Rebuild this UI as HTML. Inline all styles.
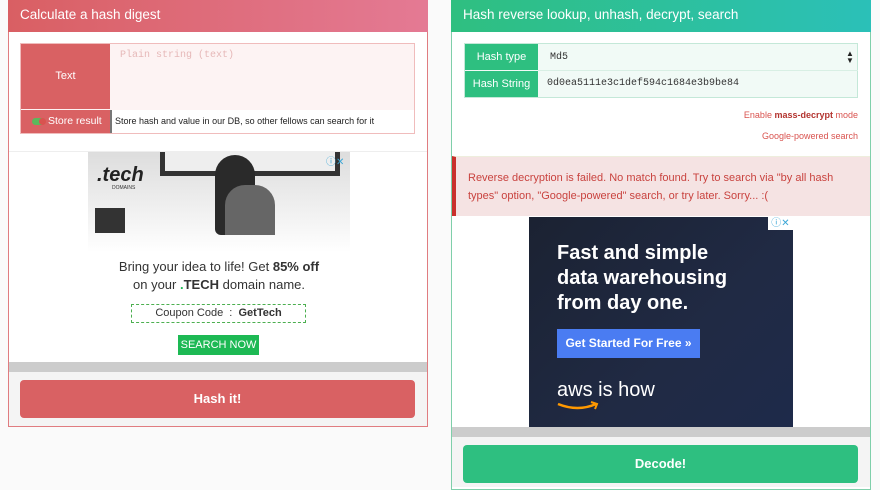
<!DOCTYPE html>
<html><head><meta charset="utf-8"><style>
*{box-sizing:border-box;margin:0;padding:0}
body{width:880px;height:487px;background:#fafafa;font-family:"Liberation Sans",sans-serif;position:relative;overflow:hidden}
.abs{position:absolute}
.mono{font-family:"Liberation Mono",monospace}
</style></head><body>
<!-- LEFT PANEL -->
<div class="abs" style="left:8px;top:0;width:420px;height:427px;border:1px solid #e07c80;background:#fff"></div>
<div class="abs" style="left:8px;top:0;width:420px;height:32px;background:linear-gradient(90deg,#d95f63,#e47a94);color:#fff;font-size:13.5px;padding:7px 12px">Calculate a hash digest</div>
<div class="abs" style="left:20px;top:43px;width:395px;height:91px;border:1px solid #f0bcbc;background:#fdf3f3"></div>
<div class="abs" style="left:21px;top:44px;width:89px;height:65px;background:#d96163;color:#fff;font-size:11px;text-align:center;line-height:65px">Text</div>
<div class="abs mono" style="left:120px;top:50px;font-size:10px;color:#e6b8b8">Plain string (text)</div>
<div class="abs" style="left:21px;top:110px;width:89px;height:23px;background:#d96163;"></div>
<div class="abs" style="left:32px;top:118px;width:13px;height:7px;border-radius:4px;background:#5cb85c"></div>
<div class="abs" style="left:39px;top:118px;width:7px;height:7px;border-radius:50%;background:#d9534f"></div>
<div class="abs" style="left:48px;top:110px;color:#fff;font-size:10.5px;line-height:23px">Store result</div>
<div class="abs" style="left:110px;top:110px;width:2px;height:23px;background:#777"></div>
<div class="abs" style="left:112px;top:110px;width:302px;height:23px;background:#fff;font-size:9px;line-height:23px;padding-left:3px;color:#222">Store hash and value in our DB, so other fellows can search for it</div>
<div class="abs" style="left:9px;top:151px;width:418px;height:1px;background:#eee"></div>
<!-- tech ad -->
<div class="abs" style="left:88px;top:152px;width:262px;height:100px;background:linear-gradient(180deg,#ddd,#f4f4f4 70%,#fff)"></div>
<div class="abs" style="left:160px;top:152px;width:180px;height:24px;border:5px solid #333;border-top:none;background:#eee"></div>
<div class="abs" style="left:215px;top:155px;width:40px;height:80px;background:#2a2a2a;border-radius:20px 20px 6px 6px"></div>
<div class="abs" style="left:225px;top:185px;width:50px;height:50px;background:#666;border-radius:20px 20px 0 0"></div>
<div class="abs" style="left:95px;top:208px;width:30px;height:25px;background:#333"></div>
<div class="abs" style="left:97px;top:164px;font-size:20px;font-weight:bold;color:#222;font-style:italic">.tech</div>
<div class="abs" style="left:112px;top:185px;font-size:5px;color:#333">DOMAINS</div>
<div class="abs" style="left:326px;top:153px;font-size:10px;color:#3aa6d6">ⓘ✕</div>
<div class="abs" style="left:88px;top:258px;width:262px;text-align:center;font-size:13px;color:#333;line-height:18px">Bring your idea to life! Get <b>85% off</b><br>on your <b><span style="color:#1db954">.</span>TECH</b> domain name.</div>
<div class="abs" style="left:131px;top:304px;width:175px;height:19px;border:1px dashed #4caf50;text-align:center;font-size:11px;line-height:17px;color:#333">Coupon Code &nbsp;: &nbsp;<b>GetTech</b></div>
<div class="abs" style="left:178px;top:335px;width:81px;height:20px;background:#1db954;color:#fff;font-size:11px;text-align:center;line-height:20px">SEARCH NOW</div>
<div class="abs" style="left:9px;top:362px;width:418px;height:10px;background:#ccc"></div>
<div class="abs" style="left:9px;top:372px;width:418px;height:54px;background:#f4f4f4"></div>
<div class="abs" style="left:20px;top:380px;width:395px;height:38px;background:#d96163;border-radius:4px;color:#fff;font-weight:bold;font-size:13px;text-align:center;line-height:38px">Hash it!</div>

<!-- RIGHT PANEL -->
<div class="abs" style="left:451px;top:0;width:420px;height:490px;border:1px solid #7fcfaa;background:#fff"></div>
<div class="abs" style="left:451px;top:0;width:420px;height:32px;background:linear-gradient(90deg,#2fbf80,#2bc0b8);color:#fff;font-size:13.5px;padding:7px 12px">Hash reverse lookup, unhash, decrypt, search</div>
<div class="abs" style="left:464px;top:43px;width:394px;height:55px;border:1px solid #c4e8d8;background:#f1faf6"></div>
<div class="abs" style="left:465px;top:44px;width:73px;height:26px;background:#2ebf80;color:#fff;font-size:11px;text-align:center;line-height:26px">Hash type</div>
<div class="abs" style="left:465px;top:71px;width:73px;height:26px;background:#2ebf80;color:#fff;font-size:11px;text-align:center;line-height:26px">Hash String</div>
<div class="abs" style="left:538px;top:70px;width:320px;height:1px;background:#d8efe4"></div>
<div class="abs mono" style="left:550px;top:52px;font-size:10px;color:#333">Md5</div>
<div class="abs" style="left:846px;top:50px;font-size:8px;line-height:7px;color:#222">▲<br>▼</div>
<div class="abs mono" style="left:547px;top:78px;font-size:10px;color:#333">0d0ea5111e3c1def594c1684e3b9be84</div>
<div class="abs" style="right:22px;top:110px;font-size:9px;color:#d9534f">Enable <b style="color:#b3342f">mass-decrypt</b> mode</div>
<div class="abs" style="right:22px;top:131px;font-size:9px;color:#d9534f">Google-powered search</div>
<div class="abs" style="left:452px;top:156px;width:418px;height:60px;background:#f5e3e3;border-left:4px solid #c9302c;border-top:1px solid #eed;padding:12px 12px;font-size:11px;line-height:18px;color:#c9433f">Reverse decryption is failed. No match found. Try to search via "by all hash types" option, "Google-powered" search, or try later. Sorry... :(</div>
<!-- aws ad -->
<div class="abs" style="left:529px;top:217px;width:264px;height:210px;background:linear-gradient(135deg,#1b2232,#202a44 60%,#1e2a4a)"></div>
<div class="abs" style="left:768px;top:217px;width:25px;height:13px;background:#fff;font-size:10px;color:#3aa6d6;line-height:13px;text-align:center">ⓘ✕</div>
<div class="abs" style="left:557px;top:241px;font-size:20px;font-weight:bold;color:#fff;line-height:25px">Fast and simple<br>data warehousing<br>from day one.</div>
<div class="abs" style="left:557px;top:329px;width:143px;height:29px;background:#4a7cf2;color:#fff;font-size:12px;font-weight:bold;line-height:29px;text-align:center">Get Started For Free »</div>
<div class="abs" style="left:557px;top:379px;font-size:20px;color:#fff">aws is how</div>
<svg class="abs" style="left:556px;top:400px" width="46" height="14"><path d="M2 4 Q22 12 40 4" stroke="#f90" stroke-width="2.5" fill="none"/><path d="M35 2 L41 4 L39 9" stroke="#f90" stroke-width="2" fill="none"/></svg>
<div class="abs" style="left:452px;top:427px;width:418px;height:10px;background:#ccc"></div>
<div class="abs" style="left:452px;top:437px;width:418px;height:50px;background:#f4f4f4"></div>
<div class="abs" style="left:463px;top:445px;width:395px;height:38px;background:#2ebf80;border-radius:4px;color:#fff;font-weight:bold;font-size:13px;text-align:center;line-height:38px">Decode!</div>
</body></html>
